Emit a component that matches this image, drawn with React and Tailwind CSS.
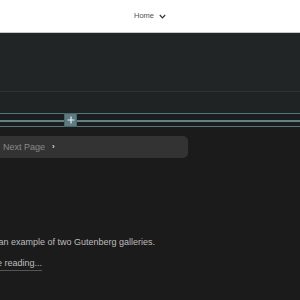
export default function App() {
  return (
    <div className="w-[300px] h-[300px] overflow-hidden bg-[#1b1b1b] flex flex-col" style={{ fontFamily: '"Liberation Sans", Arial, sans-serif' }}>
      <div className="h-[33px] shrink-0 bg-white border-b border-[#c8c8c8] flex items-center justify-center">
        <div className="flex items-center gap-[5px] text-[#505050] text-[7.5px] leading-none">
          <span>Home</span>
          <svg width="7" height="5" viewBox="0 0 7 5" fill="none" stroke="#333" strokeWidth="1.2">
            <path d="M0.8 1 L3.5 3.8 L6.2 1" />
          </svg>
        </div>
      </div>
      <div className="h-[59px] shrink-0 bg-[#212526] border-b border-[#2e3234]"></div>
      <div className="shrink-0 bg-[#1f2324] pt-[21px]">
        <div className="relative">
          <div className="h-[1px] bg-[#587379]"></div>
          <div className="h-[6px] bg-[#1a1e1f]"></div>
          <div className="h-[2px] bg-[#647f86]"></div>
          <div className="h-[4px] bg-[#1a1e1f]"></div>
          <div className="h-[1px] bg-[#587379]"></div>
          <div className="absolute left-[64px] top-[0px] w-[13px] h-[14px] bg-[#5c7a82] border border-[#4a656c] flex items-center justify-center">
            <svg width="8" height="8" viewBox="0 0 8 8" stroke="#e8eef0" strokeWidth="1.2">
              <path d="M4 0.5 V7.5 M0.5 4 H7.5" />
            </svg>
          </div>
        </div>
      </div>
      <div className="mt-[9px] ml-[-10px] w-[198px] h-[22px] shrink-0 rounded-[5px] bg-[#333333] flex items-center pl-[13px]">
        <span className="text-[9px] text-[#8a8a8a] leading-none">Next Page</span>
        <span className="ml-[7px] text-[8px] text-[#dddddd] leading-none font-bold">›</span>
      </div>
      <div className="mt-[80px] ml-[-30px] text-[9px] text-[#bdbdbd] leading-none whitespace-nowrap">
        This is an example of two Gutenberg galleries.
      </div>
      <div className="mt-[12px] ml-[-34px] text-[9px] text-[#bdbdbd] leading-none whitespace-nowrap">
        <span className="border-b border-[#555] pb-[2px]">Continue reading...</span>
      </div>
    </div>
  );
}
